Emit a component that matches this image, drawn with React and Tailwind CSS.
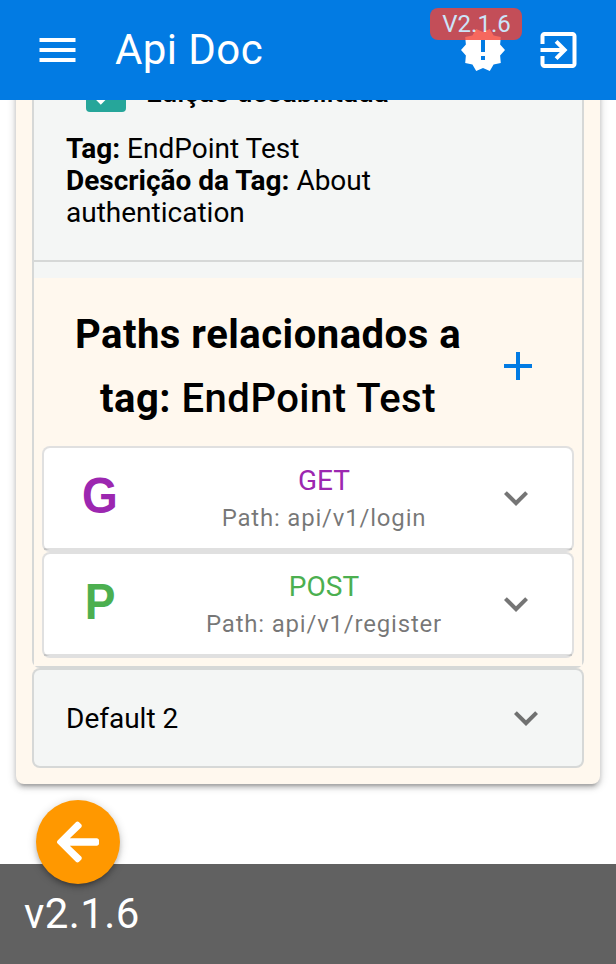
import { FaArrowLeft } from "react-icons/fa";

const ICONS = {
  menu: "M3.25 18h18v-2h-18v2zm0-5h18v-2h-18v2zm0-7v2h18V6h-18z",
  release:
    "M23 12l-2.44-2.78.34-3.68-3.61-.82-1.89-3.18L12 3 8.6 1.54 6.71 4.72l-3.61.81.34 3.68L1 12l2.44 2.78-.34 3.69 3.61.82 1.89 3.18L12 21l3.4 1.46 1.89-3.18 3.61-.82-.34-3.68L23 12zm-10 5h-2v-2h2v2zm0-4h-2V7h2v6z",
  exit: "M10.34 15.59L11.75 17l5-5-5-5-1.41 1.41L12.92 11H3.25v2h9.67l-2.58 2.59zM19.25 3h-14c-1.11 0-2 .9-2 2v4h2V5h14v14h-14v-4h-2v4c0 1.1.89 2 2 2h14c1.1 0 2-.9 2-2V5c0-1.1-.9-2-2-2z",
  down: "M7.41 8.59L12 13.17l4.59-4.58L18 10l-6 6-6-6 1.41-1.41z",
  add: "M19 13h-6v6h-2v-6H5v-2h6V5h2v6h6v2z",
};

function Icon({ name, className = "" }) {
  return (
    <svg viewBox="0 0 24 24" fill="currentColor" className={`block size-12 shrink-0 ${className}`}>
      <path d={ICONS[name]} />
    </svg>
  );
}

function PathItem({ letter, method, path, color }) {
  return (
    <div className="rounded-lg border-2 border-black/12 bg-white">
      <div className="flex h-[100px] items-center pr-8">
        <div
          className={`w-28 scale-x-[0.92] pb-[5px] text-center font-['Liberation_Sans',sans-serif] text-[50px] leading-none font-bold ${color}`}
        >
          {letter}
        </div>
        <div className="flex-1 pt-1 text-center">
          <div className={`pt-px text-[28px] leading-9 ${color}`}>{method}</div>
          <div className="-mt-px text-2xl leading-10 tracking-[0.0333em] text-black/54">Path: {path}</div>
        </div>
        <Icon name="down" className="text-black/54" />
      </div>
      <div className="h-0.5 bg-black/12" />
    </div>
  );
}

export default function App() {
  return (
    <div className="relative h-[964px] w-[616px] overflow-hidden bg-white font-[Roboto,sans-serif] text-black">
      <header className="flex h-[100px] items-center bg-[#027be3] pr-[34px] pl-[33px] text-white">
        <Icon name="menu" />
        <h1 className="flex-1 pl-[34px] text-[42px] leading-none tracking-[0.01em]">Api Doc</h1>
        <div className="relative mr-[27px]">
          <Icon name="release" />
          <div className="absolute -top-[18px] right-[-15px] flex h-8 w-[92px] items-center justify-center rounded-lg bg-[#f44336] pl-px text-2xl leading-none opacity-80">
            V2.1.6
          </div>
        </div>
        <Icon name="exit" />
      </header>

      <main className="h-[764px] overflow-hidden px-4">
        <section className="-mt-10 rounded-lg bg-[#fff8ee] p-4 shadow-[0_2px_10px_rgba(0,0,0,0.2),0_4px_4px_rgba(0,0,0,0.14),0_6px_2px_-4px_rgba(0,0,0,0.12)]">
          <div className="-mt-4 rounded-lg border-2 border-black/12 bg-[#f4f6f5]">
            <div className="h-[198px] px-8 pt-[10px]">
              <div className="flex items-center pl-5">
                <div className="size-10 rounded bg-[#26a69a] p-1">
                  <svg viewBox="0 0 24 24" className="size-8" fill="none" stroke="white" strokeWidth="3.12">
                    <path d="M1.73,12.91 8.1,19.28 22.79,4.59" />
                  </svg>
                </div>
                <span className="pt-0.5 pl-5 text-[28px] leading-none font-medium tracking-[-0.05px]">
                  Edição desabilitada
                </span>
              </div>
              <p className="mt-[21px] w-[340px] text-[28px] leading-8">
                <b>Tag:</b> EndPoint Test
                <br />
                <b>Descrição da Tag:</b> About authentication
              </p>
            </div>
            <div className="h-0.5 bg-black/12" />
            <div className="mt-4 bg-[#fff8ee] px-2 pt-6 pb-2">
              <div className="flex h-32 items-center pr-8">
                <h2 className="flex-1 pt-0.5 text-center text-[40px] leading-[64px] font-medium tracking-[0.0125em]">
                  <b>
                    Paths relacionados a<br />
                    tag:
                  </b>{" "}
                  EndPoint Test
                </h2>
                <Icon name="add" className="text-[#027be3]" />
              </div>
              <div className="mt-4">
                <PathItem letter="G" method="GET" path="api/v1/login" color="text-[#9c27b0]" />
                <PathItem letter="P" method="POST" path="api/v1/register" color="text-[#4caf50]" />
              </div>
            </div>
          </div>
          <div className="flex h-[100px] items-center justify-between rounded-lg border-2 border-black/12 bg-[#f4f6f5] pr-8 pl-8 text-[28px]">
            <span className="pt-0.5">Default 2</span>
            <Icon name="down" className="text-black/54" />
          </div>
        </section>
      </main>

      <footer className="flex h-[100px] items-center bg-[#616161] pl-6 text-[42px] leading-none tracking-[0.01em] text-white">
        v2.1.6
      </footer>

      <button className="absolute bottom-20 left-9 flex size-[84px] items-center justify-center rounded-full bg-[#ff9800] text-white shadow-[0_2px_10px_rgba(0,0,0,0.2),0_4px_4px_rgba(0,0,0,0.14),0_6px_2px_-4px_rgba(0,0,0,0.12)]">
        <FaArrowLeft className="size-12" />
      </button>
    </div>
  );
}
